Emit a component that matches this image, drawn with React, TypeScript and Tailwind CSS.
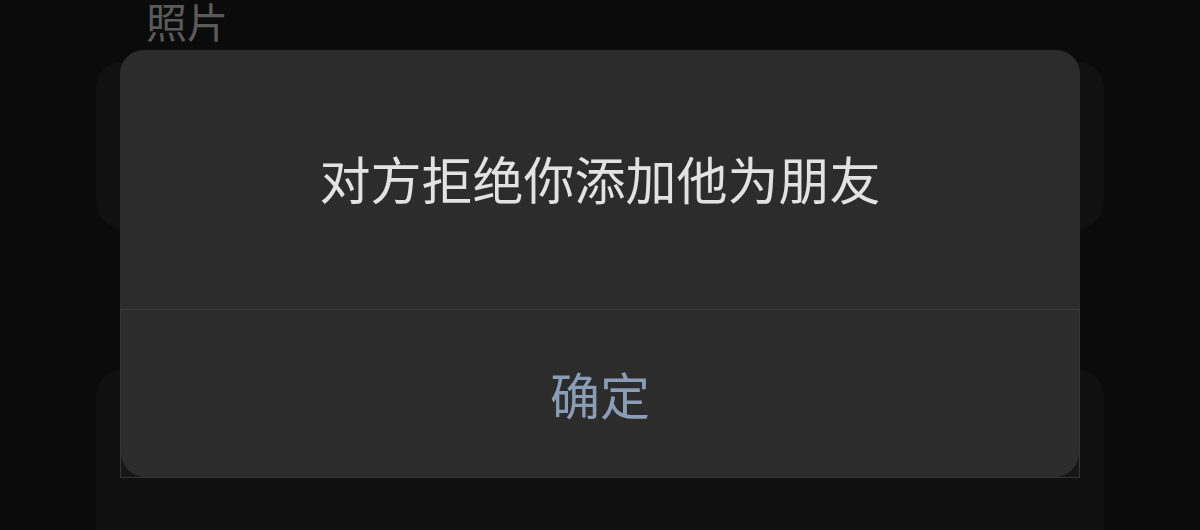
export default function App() {
  const font = { fontFamily: '"Noto Sans CJK SC", "Noto Sans", sans-serif' };
  return (
    <div className="relative w-[1200px] h-[530px] overflow-hidden bg-[#0b0b0b]" style={font}>
      {/* page behind the dialog */}
      <div className="flex flex-col">
        <div className="h-[62px] pl-[146px] text-[41px] leading-[41px] text-[#5a5a5a]">照片</div>
        <div className="mx-[96px] h-[166px] rounded-[26px] bg-[#111111]" />
        <div className="mx-[96px] mt-[142px] h-[200px] rounded-[26px] bg-[#101010]" />
      </div>

      {/* dialog */}
      <div className="absolute left-[120px] top-[50px] w-[960px] flex flex-col">
        <div className="h-[260px] flex items-center justify-center rounded-t-[24px] bg-[#2c2c2c] border-b border-[#3b3b3b]">
          <span className="text-[51px] leading-none text-[#e2e2e2] -mt-[2px]">对方拒绝你添加他为朋友</span>
        </div>
        <div className="h-[168px] border-l border-r border-b border-[#353535] bg-[#161616]">
          <div className="h-full flex items-center justify-center rounded-b-[24px] bg-[#2c2c2c]">
            <span className="text-[50px] leading-none text-[#8a9cb6] -mt-[2px]">确定</span>
          </div>
        </div>
      </div>
    </div>
  );
}
